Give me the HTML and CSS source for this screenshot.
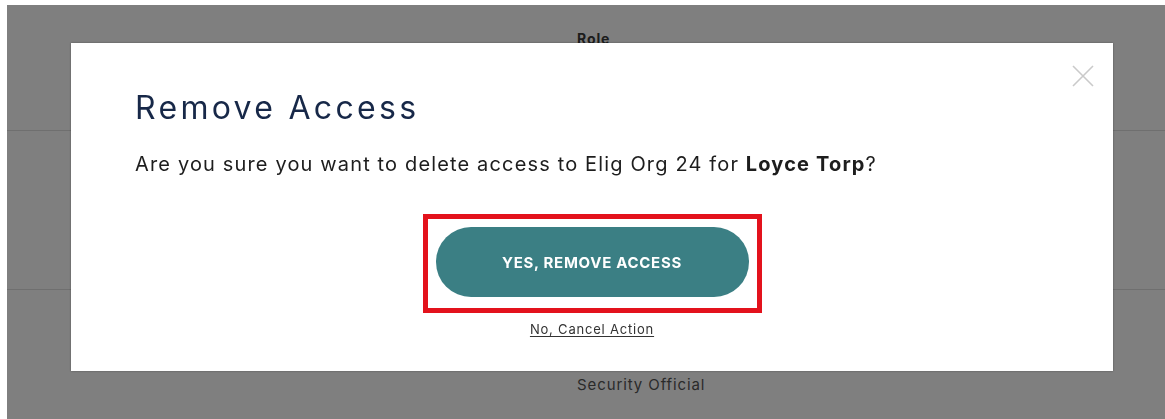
FILE: index.html
```html
<!DOCTYPE html>
<html lang="en">
<head>
<meta charset="utf-8">
<title>Remove Access</title>
<link rel="stylesheet" href="styles.css">
</head>
<body>
  <div class="page">
    <div class="table">
      <div class="row row-head">
        <div class="cell-spacer"></div>
        <div class="cell cell-role head">Role</div>
      </div>
      <div class="row row-mid">
        <div class="cell-spacer"></div>
        <div class="cell cell-role"></div>
      </div>
      <div class="row row-last">
        <div class="cell-spacer"></div>
        <div class="cell cell-role">Security Official</div>
      </div>
    </div>
  </div>

  <div class="overlay"></div>

  <div class="modal" role="dialog" aria-labelledby="modal-title">
    <button class="close" aria-label="Close">
      <svg width="22" height="22" viewBox="0 0 22 22" aria-hidden="true">
        <path d="M1 1 L21 21 M21 1 L1 21" stroke="#cacaca" stroke-width="1.6" fill="none"/>
      </svg>
    </button>
    <h2 class="modal-title" id="modal-title">Remove Access</h2>
    <p class="modal-text">Are you sure you want to delete access to Elig Org 24 for <strong>Loyce Torp</strong>?</p>
    <div class="actions">
      <div class="highlight">
        <button class="btn-primary">YES, REMOVE ACCESS</button>
      </div>
      <a class="cancel" href="#">No, Cancel Action</a>
    </div>
  </div>
</body>
</html>
```

FILE: styles.css
```css
html, body {
  margin: 0;
  padding: 0;
  background: #ffffff;
  height: 100%;
  overflow: hidden;
}

body {
  font-family: "Inter", "Liberation Sans", sans-serif;
  color: #222;
}

/* page behind the dialog */
.page {
  margin: 5px 0 0 7px;
  background: #ffffff;
  height: calc(100% - 5px);
}

.row {
  display: flex;
  border-bottom: 1px solid #dedede;
}

.row-head {
  height: 125px;
}

.row-mid {
  height: 158px;
}

.row-last {
  border-bottom: none;
}

.cell-spacer {
  width: 570px;
  flex-shrink: 0;
}

.cell {
  font-size: 15px;
  letter-spacing: 0.9px;
  color: #555;
}

.cell.head {
  font-size: 14px;
  font-weight: 700;
  letter-spacing: 0.9px;
  color: #3a3a3a;
  padding-top: 25px;
}

.row-last .cell {
  padding-top: 85px;
}

.overlay {
  position: fixed;
  top: 5px;
  left: 7px;
  right: 0;
  bottom: 0;
  background: rgba(0, 0, 0, 0.5);
}

/* dialog */
.modal {
  position: fixed;
  left: 71px;
  top: 43px;
  width: 1042px;
  height: 328px;
  box-sizing: border-box;
  background: #ffffff;
  box-shadow: 0 0 2px rgba(0, 0, 0, 0.35);
  padding: 45px 64px 0;
}

.close {
  position: absolute;
  top: 22px;
  right: 19px;
  padding: 0;
  border: none;
  background: none;
  line-height: 0;
  cursor: pointer;
}

.modal-title {
  margin: 0;
  font-size: 32px;
  font-weight: 400;
  line-height: 40px;
  color: #172848;
  letter-spacing: 3.3px;
}

.modal-text {
  margin: 24px 0 0;
  font-size: 20px;
  line-height: 24px;
  letter-spacing: 1.15px;
  color: #1d1d1d;
}

.modal-text strong {
  font-weight: 700;
}

.actions {
  display: flex;
  flex-direction: column;
  align-items: center;
  margin-top: 38px;
}

.highlight {
  border: 5px solid #e3121c;
  padding: 8px 8px 11px;
}

.btn-primary {
  display: block;
  width: 313px;
  height: 70px;
  border: none;
  border-radius: 35px;
  background: #3b7f84;
  color: #ffffff;
  font-family: "Inter", "Liberation Sans", sans-serif;
  font-size: 15px;
  font-weight: 700;
  letter-spacing: 0.7px;
  cursor: pointer;
}

.cancel {
  margin-top: 8px;
  font-size: 13px;
  letter-spacing: 0.8px;
  color: #333;
  text-decoration: underline;
  text-underline-offset: 2px;
}
```
